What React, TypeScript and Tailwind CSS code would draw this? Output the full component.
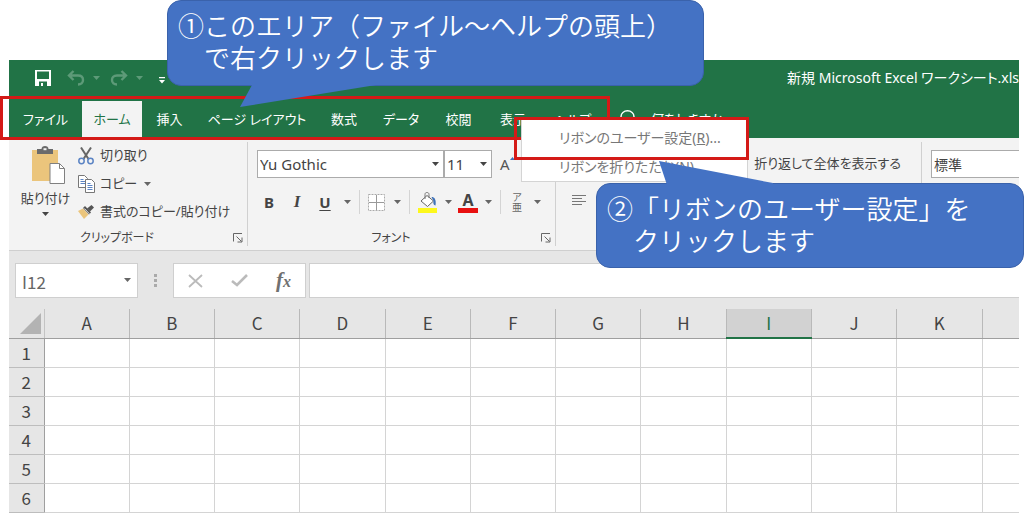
import React from "react";

const uiFont = "font-['Noto_Sans','Noto_Sans_CJK_JP',sans-serif] [font-feature-settings:'palt']";
const jpFont = "font-['Noto_Sans_CJK_JP',sans-serif]";

const tabs = [
  { label: "ファイル", width: "w-[73px]" },
  { label: "ホーム", width: "w-[60px]", active: true },
  { label: "挿入", width: "w-[55px]" },
  { label: "ページ レイアウト", width: "w-[120px]" },
  { label: "数式", width: "w-[54px]" },
  { label: "データ", width: "w-[60px]" },
  { label: "校閲", width: "w-[55px]" },
  { label: "表示", width: "w-[54px]" },
  { label: "ヘルプ", width: "w-[65px]" },
];

const columns = ["A", "B", "C", "D", "E", "F", "G", "H", "I", "J", "K"];
const rows = [1, 2, 3, 4, 5, 6];

function Caret({ className = "" }: { className?: string }) {
  return (
    <svg viewBox="0 0 7 4" className={`h-1 w-[7px] shrink-0 fill-current ${className}`} aria-hidden="true">
      <path d="M0 0h7L3.5 4z" />
    </svg>
  );
}

function CaretButton({ label }: { label: string }) {
  return (
    <button type="button" aria-label={label} className="flex h-6 w-5 shrink-0 items-center justify-center text-[#666]">
      <Caret />
    </button>
  );
}

function Launcher({ label }: { label: string }) {
  return (
    <button type="button" aria-label={label} className="text-[#666]">
      <svg viewBox="0 0 10 10" className="size-[10px]" fill="none" stroke="currentColor">
        <path d="M.5 8.500V.5H9M3.500 3.500l5 5M9 4.500V9H4.500" />
      </svg>
    </button>
  );
}

function SaveIcon() {
  return (
    <svg viewBox="0 0 16 16" className="size-4" aria-hidden="true">
      <path d="M0 0h16v16H0z" fill="#fff" />
      <path d="M2 1.500h12v7.500H2zM4 11.500h8V16H4z" fill="#217346" />
      <path d="M6 13h2v3H6z" fill="#fff" />
    </svg>
  );
}

function UndoIcon({ flip = false }: { flip?: boolean }) {
  return (
    <svg viewBox="0 0 18 16" className="h-4 w-[18px]" fill="none" stroke="#5d9a78" strokeWidth="2.400" aria-hidden="true">
      {flip ? (
        <path d="M11.500 1l4.500 4.500-4.500 4.500M16 5.500H7C3.500 5.500 2 7.500 2 10c0 3 2 4.500 5 4.500" />
      ) : (
        <path d="M6.500 1L2 5.500 6.500 10M2 5.500h9c3.500 0 5 2 5 4.500 0 3-2 4.500-5 4.500" />
      )}
    </svg>
  );
}

function PasteIcon() {
  return (
    <svg viewBox="0 0 34 38" className="h-[38px] w-[34px]" aria-hidden="true">
      <path d="M1 4h26v31H1z" fill="#ebc57c" />
      <path d="M6 3h4.500c0-2 1.500-3 3.500-3s3.500 1 3.500 3H22v5H6z" fill="#6b6b6b" />
      <path d="M12.500 2.200h3v2h-3z" fill="#f3f3f3" />
      <path d="M19 17.500h9.500l5 5V37.500H19z" fill="#fff" stroke="#808080" />
      <path d="M28.500 17.500v5h5" fill="none" stroke="#808080" />
    </svg>
  );
}

function CutIcon() {
  return (
    <svg viewBox="0 0 16 18" className="h-[18px] w-4" fill="none" aria-hidden="true">
      <path d="M3 .5l7.500 11.500M13 .5L5.500 12" stroke="#666" strokeWidth="2" />
      <circle cx="3.500" cy="14" r="2.700" stroke="#5b84c4" strokeWidth="1.500" />
      <circle cx="12.500" cy="14" r="2.700" stroke="#5b84c4" strokeWidth="1.500" />
    </svg>
  );
}

function CopyIcon() {
  return (
    <svg viewBox="0 0 17 18" className="h-[18px] w-[17px]" fill="#fff" stroke="#777" aria-hidden="true">
      <path d="M.5 .5h6l3 3v9h-9z" />
      <path d="M2.500 4.500h3M2.500 6.500h5M2.500 8.500h5" stroke="#5b84c4" />
      <path d="M7.500 4.500h6l3 3v10h-9z" />
      <path d="M9.500 8.500h3M9.500 10.500h5M9.500 12.500h5M9.500 14.500h5" stroke="#5b84c4" />
    </svg>
  );
}

function PainterIcon() {
  return (
    <svg viewBox="0 0 16 14" className="h-[14px] w-4" aria-hidden="true">
      <path d="M0 6l5-2.500 5.500 6L6 14z" fill="#ebc57c" />
      <path d="M5 3l2-2 6 6.500-2 2z" fill="#555" />
      <path d="M9 3.500L13.500 0 16 2.500 12 6.500z" fill="#555" />
      <path d="M6.500 3.500l5 5.300" stroke="#f3f3f3" strokeWidth=".8" />
    </svg>
  );
}

function BordersIcon() {
  return (
    <svg viewBox="0 0 17 17" className="size-[17px]" fill="#fff" stroke="#aaa" aria-hidden="true">
      <path d="M.5 .5h16v16H.5z" strokeDasharray="2 1" />
      <path d="M8.500 1v15M1 8.500h15" stroke="#999" />
    </svg>
  );
}

function FillIcon() {
  return (
    <svg viewBox="0 0 20 21" className="h-[21px] w-5" fill="none" aria-hidden="true">
      <path d="M9 3.500L15.500 9 9.500 14.500 3 9z" fill="#fff" stroke="#666" />
      <path d="M7 7V2.500C7 .8 8 .5 9 .5s2 .5 2 2V6" stroke="#777" />
      <path d="M13.500 5c3 0 5 2.500 4 8.500-2-.5-2.500-2-2-4.500z" fill="#3f72b8" />
      <path d="M0 16h19v5H0z" fill="#fdf81c" />
    </svg>
  );
}

function Highlight({ className }: { className: string }) {
  return <div className={`pointer-events-none absolute border-[3px] border-[#d41a17] ${className}`} aria-hidden="true" />;
}

function ComboBox({ label, value, className }: { label: string; value: string; className: string }) {
  return (
    <div className={`relative flex shrink-0 text-[#444] ${className}`}>
      <select aria-label={label} className="h-7 w-full appearance-none border border-[#ababab] bg-white px-[2px] text-[15px]">
        <option>{value}</option>
      </select>
      <Caret className="pointer-events-none absolute top-3 right-[5px]" />
    </div>
  );
}

function TitleBar() {
  return (
    <header className="flex h-9 items-center overflow-hidden pl-[26px] text-white">
      <button type="button" aria-label="上書き保存"><SaveIcon /></button>
      <div className="ml-4 flex items-center gap-2 text-[#5d9a78]">
        <button type="button" aria-label="元に戻す"><UndoIcon /></button>
        <Caret />
      </div>
      <div className="ml-[10px] flex items-center gap-2 text-[#5d9a78]">
        <button type="button" aria-label="やり直し"><UndoIcon flip /></button>
        <Caret />
      </div>
      <button type="button" aria-label="クイック アクセス ツール バーのカスタマイズ" className="ml-4 pt-1">
        <svg viewBox="0 0 6 7" className="h-[7px] w-[6px]" fill="#fff"><path d="M0 0h6v1.200H0zM0 3h6L3 6.500z" /></svg>
      </button>
      <h1 className="ml-auto text-[14px] leading-5 whitespace-nowrap">新規 Microsoft Excel ワークシート.xls</h1>
    </header>
  );
}

function TabBar() {
  return (
    <nav className="flex h-[42px] items-end overflow-hidden text-[13px] text-white">
      {tabs.map((t) => (
        <button
          key={t.label}
          type="button"
          className={`h-[37px] shrink-0 whitespace-nowrap ${t.width} ${t.active ? "bg-[#f3f3f3] text-[#217346]" : ""}`}
        >
          {t.label}
        </button>
      ))}
      <button type="button" className="ml-[15px] flex h-[37px] shrink-0 items-center gap-4">
        <svg viewBox="0 0 15 20" className="h-5 w-[15px]" fill="none" stroke="#fff" strokeWidth="1.400" aria-hidden="true">
          <path d="M4.500 14c0-3-3.500-4-3.500-7.500a6.500 5.700 0 0 1 13 0C14 10 10.500 11 10.500 14zM5 16.500h5M6 19h3" />
        </svg>
        何をしますか
      </button>
    </nav>
  );
}

function ClipboardGroup() {
  return (
    <section aria-label="クリップボード" className="flex w-[239px] shrink-0 flex-col justify-between border-r border-[#d0d0d0] pr-1">
      <div className="flex gap-[7px] pl-[11px]">
        <button type="button" className="flex w-[51px] flex-col items-center pt-1 leading-5 whitespace-nowrap">
          <span className="pl-1"><PasteIcon /></span>
          <span className="pt-1">貼り付け</span>
          <Caret className="mt-1" />
        </button>
        <div className="flex flex-col">
          <button type="button" className="flex h-7 items-center gap-[6px] whitespace-nowrap"><CutIcon />切り取り</button>
          <div className="flex h-7 items-center">
            <button type="button" className="flex items-center gap-[5px] whitespace-nowrap"><CopyIcon />コピー</button>
            <CaretButton label="コピーのオプション" />
          </div>
          <button type="button" className="flex h-7 items-center gap-[6px] whitespace-nowrap"><PainterIcon />書式のコピー/貼り付け</button>
        </div>
      </div>
      <div className="flex h-4 items-center text-[12px] leading-4">
        <h2 className="flex-1 pr-2 text-center">クリップボード</h2>
        <Launcher label="クリップボードの設定" />
      </div>
    </section>
  );
}

function Divider() {
  return <span className="h-6 w-px shrink-0 bg-[#d4d4d4]" />;
}

function FontGroup() {
  return (
    <section aria-label="フォント" className="flex w-[308px] shrink-0 flex-col justify-between border-r border-[#d0d0d0] pr-1 pl-[9px]">
      <div>
        <div className="flex items-center pt-2">
          <ComboBox label="フォント名" value="Yu Gothic" className="w-[187px]" />
          <ComboBox label="フォント サイズ" value="11" className="w-[48px]" />
          <button type="button" aria-label="フォント サイズの拡大" className="ml-2 flex items-start text-[15px] text-[#555]">
            A<svg viewBox="0 0 5 3" className="mt-1 h-[3px] w-[5px]" fill="#3f72b8"><path d="M0 3L2.500 0 5 3z" /></svg>
          </button>
        </div>
        <div className="mt-3 flex h-6 items-center text-[#444]">
          <button type="button" className="w-6 text-[15px] leading-6 font-bold">B</button>
          <button type="button" className="ml-1 w-6 font-['Liberation_Serif',serif] text-[17px] leading-6 font-bold italic">I</button>
          <button type="button" className="ml-1 w-6 text-[15px] leading-6 font-bold underline underline-offset-2">U</button>
          <CaretButton label="下線の種類" />
          <span className="ml-[2px] flex"><Divider /></span>
          <button type="button" aria-label="罫線" className="ml-2"><BordersIcon /></button>
          <span className="ml-[2px]"><CaretButton label="罫線の種類" /></span>
          <span className="ml-[2px] flex"><Divider /></span>
          <button type="button" aria-label="塗りつぶしの色" className="ml-2"><FillIcon /></button>
          <CaretButton label="塗りつぶしの色の選択" />
          <button type="button" aria-label="フォントの色" className="flex w-5 shrink-0 flex-col items-center">
            <span className="text-[16px] leading-4 font-bold">A</span>
            <span className="h-[5px] w-5 bg-[#e81010]" />
          </button>
          <CaretButton label="フォントの色の選択" />
          <span className="ml-[2px] flex"><Divider /></span>
          <button type="button" aria-label="ふりがな" className="ml-[10px] flex w-3 shrink-0 flex-col items-center text-[10px] leading-[10px] text-[#666]">
            <span>ア</span>
            <span>亜</span>
          </button>
          <span className="ml-1"><CaretButton label="ふりがなの設定" /></span>
        </div>
      </div>
      <div className="flex h-4 items-center text-[12px] leading-4">
        <h2 className="flex-1 pr-4 text-center">フォント</h2>
        <Launcher label="フォントの設定" />
      </div>
    </section>
  );
}

function Ribbon() {
  return (
    <div className="flex h-[113px] overflow-hidden border-b border-[#cfcfcf] bg-[#f3f3f3] py-1 text-[13px] text-[#444]">
      <ClipboardGroup />
      <FontGroup />
      <section aria-label="配置" className="flex min-w-[366px] flex-1 flex-col border-r border-[#d0d0d0] px-4">
        <button type="button" className="mt-2 h-7 self-end pr-1 whitespace-nowrap">折り返して全体を表示する</button>
        <button type="button" aria-label="左揃え" className="mt-4 self-start text-[#777]">
          <svg viewBox="0 0 14 12" className="h-3 w-[14px]" stroke="currentColor" fill="none"><path d="M0 1.500h14M0 4.500h10M0 7.500h14M0 10.500h10" /></svg>
        </button>
      </section>
      <section aria-label="数値" className="w-[98px] shrink-0 pt-2 pl-[9px]">
        <select aria-label="表示形式" className="h-7 w-full appearance-none border border-r-0 border-[#ababab] bg-white px-[2px] text-[14px]">
          <option>標準</option>
        </select>
      </section>
    </div>
  );
}

function FormulaBar() {
  return (
    <div className={`flex bg-[#e6e6e6] pt-3 pb-[11px] pl-[6px] ${jpFont}`}>
      <div className="relative flex w-[123px] shrink-0 text-[#666]">
        <input aria-label="名前ボックス" defaultValue="I12" className="h-[35px] w-full border border-[#cfcfcf] bg-white px-[6px] pt-[2px] text-[17px]" />
        <Caret className="pointer-events-none absolute top-[15px] right-[7px]" />
      </div>
      <svg viewBox="0 0 3 13" className="mx-4 my-[11px] h-[13px] w-[3px] shrink-0" fill="#aaa" aria-hidden="true">
        <path d="M0 0h3v3H0zM0 5h3v3H0zM0 10h3v3H0z" />
      </svg>
      <div className="flex w-[133px] shrink-0 items-center justify-between border border-[#cfcfcf] bg-white px-[14px]">
        <button type="button" aria-label="キャンセル">
          <svg viewBox="0 0 15 14" className="h-[14px] w-[15px]" stroke="#bbb" strokeWidth="1.800"><path d="M1 1l13 12M14 1L1 13" /></svg>
        </button>
        <button type="button" aria-label="入力">
          <svg viewBox="0 0 17 13" className="h-[13px] w-[17px]" stroke="#bbb" strokeWidth="2.600" fill="none"><path d="M1 7l5 4L16 1" /></svg>
        </button>
        <button type="button" aria-label="関数の挿入" className="font-['Liberation_Serif',serif] text-[21px] leading-6 font-bold text-[#707070] italic">
          f<span className="text-[16px]">x</span>
        </button>
      </div>
      <input aria-label="数式バー" className="ml-[3px] min-w-0 flex-1 border border-r-0 border-[#cfcfcf] bg-white px-2" />
    </div>
  );
}

function Sheet() {
  return (
    <table className={`w-full table-fixed border-collapse text-[#444] ${jpFont}`}>
      <colgroup>
        <col className="w-[35px]" />
        {columns.map((c) => <col key={c} />)}
        <col className="w-[37px]" />
      </colgroup>
      <thead>
        <tr className="h-[29px] bg-[#e6e6e6] text-[17px] leading-5">
          <td className="border-r border-b border-r-[#c4c4c4] border-b-[#9f9f9f] p-0">
            <svg viewBox="0 0 21 21" className="mr-[3px] ml-auto size-[21px]" fill="#b3b3b3" aria-hidden="true"><path d="M21 0v21H0z" /></svg>
          </td>
          {columns.map((c) => (
            <th
              key={c}
              scope="col"
              className={`border-r border-r-[#b9b9b9] p-0 font-normal ${c === "I" ? "border-b-2 border-b-[#217346] bg-[#d2d2d2] text-[#217346]" : "border-b border-b-[#9f9f9f]"}`}
            >
              {c}
            </th>
          ))}
          <td className="border-b border-b-[#9f9f9f] p-0" />
        </tr>
      </thead>
      <tbody>
        {rows.map((r) => (
          <tr key={r} className="h-[29px]">
            <th scope="row" className="border-r border-b border-r-[#9f9f9f] border-b-[#bdbdbd] bg-[#e6e6e6] p-0 text-[17px] leading-5 font-normal">{r}</th>
            {columns.map((c) => <td key={c} className="border-r border-b border-[#d4d4d4] p-0" />)}
            <td className="border-b border-[#d4d4d4] p-0" />
          </tr>
        ))}
      </tbody>
    </table>
  );
}

export default function App() {
  return (
    <div className={`relative overflow-hidden bg-white pt-[60px] pr-[5px] pl-[9px] ${uiFont}`}>
      <main>
        <div className="bg-[#217346]">
          <TitleBar />
          <TabBar />
        </div>
        <Ribbon />
        <FormulaBar />
        <Sheet />
      </main>

      <Highlight className="top-[96px] left-0 h-11 w-[610px]" />

      <div role="menu" className="absolute top-[119px] left-[521px] flex h-[63px] w-[227px] flex-col border border-[#d4d4d4] bg-white text-[14px] text-[#777]">
        <button type="button" role="menuitem" className="h-[34px] pl-[37px] text-left whitespace-nowrap">
          リボンのユーザー設定(<u>R</u>)...
        </button>
        <button type="button" role="menuitem" className="h-[25px] pl-[37px] text-left whitespace-nowrap">
          リボンを折りたたむ(<u>N</u>)
        </button>
      </div>
      <Highlight className="top-[117px] left-[514px] h-[43px] w-[235px]" />

      <aside className={`absolute top-0 left-[167px] h-[86px] w-[537px] rounded-[14px] border border-[#3a62ab] bg-[#4472c4] pt-2 pl-[10px] text-[26px] leading-8 font-[350] whitespace-nowrap text-white [font-feature-settings:normal] ${jpFont}`}>
        <p>①このエリア（ファイル～ヘルプの頭上）</p>
        <p className="pl-[26px]">で右クリックします</p>
        <svg viewBox="0 0 136 23" className="absolute top-[83px] left-[72px] h-[23px] w-[136px]" fill="#4472c4" aria-hidden="true">
          <path d="M12.500 0L0 23 136 1V0z" />
        </svg>
      </aside>

      <aside className={`absolute top-[183px] left-[596px] h-[85px] w-[428px] rounded-[14px] border border-[#3a62ab] bg-[#4472c4] pt-2 pl-[10px] text-[26px] leading-8 font-[350] whitespace-nowrap text-white [font-feature-settings:normal] ${jpFont}`}>
        <p>②「リボンのユーザー設定」を</p>
        <p className="pl-[26px]">クリックします</p>
        <svg viewBox="0 0 114 24" className="absolute -top-[23px] left-[62px] h-6 w-[114px]" fill="#4472c4" aria-hidden="true">
          <path d="M0 0L8 24H114V22z" />
        </svg>
      </aside>
    </div>
  );
}
